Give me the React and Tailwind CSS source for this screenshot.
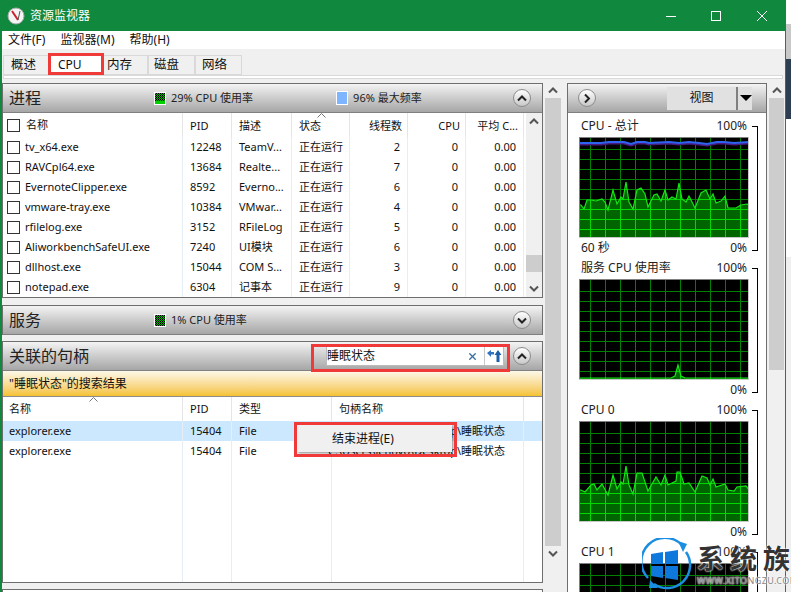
import { useId } from "react"
import { X } from "lucide-react"

const processes = [
    { name: "tv_x64.exe", pid: 12248, desc: "TeamV...", threads: 2 },
    { name: "RAVCpl64.exe", pid: 13684, desc: "Realte...", threads: 7 },
    { name: "EvernoteClipper.exe", pid: 8592, desc: "Everno...", threads: 6 },
    { name: "vmware-tray.exe", pid: 10384, desc: "VMwar...", threads: 4 },
    { name: "rfilelog.exe", pid: 3152, desc: "RFileLog", threads: 5 },
    { name: "AliworkbenchSafeUI.exe", pid: 7240, desc: "UI模块", threads: 6 },
    { name: "dllhost.exe", pid: 15044, desc: "COM S...", threads: 3 },
    { name: "notepad.exe", pid: 6304, desc: "记事本", threads: 9 },
]

const totalLine = [[0,68],[2,68],[5,72],[8,63],[12,63],[17,64],[23,62],[26,65],[29,73],[34,53],[38,67],[42,60],[44,62],[47,45],[50,65],[54,72],[58,53],[62,51],[66,57],[69,70],[75,58],[78,57],[82,64],[86,53],[89,63],[93,60],[97,62],[100,46],[103,62],[107,65],[110,59],[116,71],[122,56],[127,53],[131,62],[134,57],[137,66],[142,64],[146,59],[149,71],[157,71],[162,68],[168,67],[170,68]]
const cpu0Line = [[0,69],[2,69],[6,71],[12,64],[15,63],[18,69],[23,63],[29,74],[34,54],[38,68],[42,61],[44,63],[47,45],[50,64],[54,73],[58,52],[63,52],[69,70],[77,56],[82,64],[86,54],[89,64],[97,60],[98,51],[101,51],[105,63],[110,62],[116,71],[123,55],[128,57],[131,64],[134,58],[137,66],[146,63],[149,69],[155,70],[158,66],[167,65],[170,69]]
const serviceLine = [[0,99],[92,99],[96,97],[99,86],[102,97],[106,99],[170,99]]
const cpu1Line = [[0,70],[170,70]]
const freqLine = "0,6 22,6 30,5 45,5 52,7 58,5 66,5 70,6 90,5 100,6 110,5 120,6 128,7 138,5 145,5 155,6 170,5"

const Chevron = ({ dir = "up", className = "" }) => (
    <svg width="10" height="7" viewBox="0 0 10 7" className={`${dir === "down" ? "rotate-180" : dir === "right" ? "rotate-90" : ""} ${className}`}>
        <path d="M1 5.5 L5 1.5 L9 5.5" fill="none" stroke="currentColor" strokeWidth="2" />
    </svg>
)

const RoundButton = ({ dir }) => (
    <div className="flex h-[18px] w-[18px] shrink-0 items-center justify-center rounded-full border border-[#8c8c8c] bg-gradient-to-b from-white to-[#c8c8c8] text-[#222]">
        <Chevron dir={dir} />
    </div>
)

const Meter = ({ full }) => (
    <div className="flex h-[13px] w-[12px] flex-col border border-white bg-[#00d000]">
        <div className={`${full ? "h-full" : "h-[8px]"} bg-[repeating-conic-gradient(#000_0_25%,#00b000_0_50%)] bg-[length:2px_2px]`} />
    </div>
)

const PanelHeader = ({ title, children }) => (
    <div className="flex h-[29px] shrink-0 items-center border-b border-[#808080] bg-gradient-to-b from-[#f4f4f4] to-[#a6a6a6]">
        <span className="ml-[6px] text-[16px] leading-none text-[#222]">{title}</span>
        {children}
    </div>
)

const MeterText = ({ className, children }) => <span className={`text-[11px] text-[#222] ${className}`}>{children}</span>

const Scrollbar = () => (
    <div className="flex w-[16px] shrink-0 flex-col bg-[#f0f0f0]">
        <div className="flex h-[15px] items-center justify-center text-[#555]"><Chevron /></div>
        <div className="h-[448px] bg-[#cdcdcd]" />
        <div className="flex-1" />
        <div className="mb-[1px] flex h-[15px] items-center justify-center text-[#555]"><Chevron dir="down" /></div>
    </div>
)

const Graph = ({ line, freq }) => {
    const id = useId()
    const verticals = Array.from({ length: 11 }, (_, i) => 11 + i * 15)
    const horizontals = Array.from({ length: 9 }, (_, i) => 12 + i * 10)
    const area = `0,101 ${line.map((p) => p.join(",")).join(" ")} 170,101`
    const grid = (color) => (
        <g stroke={color} strokeWidth="1">
            {verticals.map((x) => <line key={x} x1={x + 0.5} y1="0" x2={x + 0.5} y2="101" />)}
            {horizontals.map((y) => <line key={y} x1="0" y1={y + 0.5} x2="170" y2={y + 0.5} />)}
        </g>
    )
    return (
        <svg width="170" height="101" viewBox="0 0 170 101" className="block">
            <defs>
                <clipPath id={id}><polygon points={area} /></clipPath>
            </defs>
            <rect width="170" height="101" fill="#000" />
            {grid("#008000")}
            <polygon points={area} fill="#006400" />
            <g clipPath={`url(#${id})`}>{grid("#00d800")}</g>
            <polyline points={line.map((p) => p.join(",")).join(" ")} fill="none" stroke="#14e614" strokeWidth="1.2" />
            {freq && (
                <g fill="none">
                    <polyline points={freq} stroke="#4b1a80" strokeWidth="2" transform="translate(0,1.5)" />
                    <polyline points={freq} stroke="#2e62f0" strokeWidth="2" />
                </g>
            )}
            <path d="M0 .5 H170 M.5 0 V101" stroke="#808080" strokeWidth="1" />
            <path d="M0 100.5 H170 M169.5 0 V101" stroke="#c8c8c8" strokeWidth="1" />
        </svg>
    )
}

const GraphBlock = ({ label, foot, line, freq }) => (
    <div className="flex pl-[11px] shrink-0">
        <div className="w-[170px] text-[12px] text-[#222]">
            <div className="flex h-[19px] items-center justify-between px-[2px]">
                <span>{label}</span>
                <span>100%</span>
            </div>
            <div className="mt-[2px]"><Graph line={line} freq={freq} /></div>
            <div className="flex h-[20px] items-center justify-between px-[2px]">
                <span>{foot}</span>
                <span>0%</span>
            </div>
        </div>
        <div className="ml-[3px] mb-[7px] mt-[10px] w-[6px] border-y border-r border-black" />
    </div>
)

const Watermark = () => (
    <div className="absolute left-[642px] top-[538px] flex w-[149px] overflow-hidden">
        <svg width="50" height="54" viewBox="0 0 50 54" className="shrink-0">
            <path d="M6 40 A23 23 0 0 1 40 7" fill="none" stroke="#1a8ee0" strokeWidth="2.5" />
            <path d="M44 14 A23 23 0 0 1 12 46" fill="none" stroke="#1a8ee0" strokeWidth="2.5" />
            <path d="M36 3 L45 6 L41 14 Z M8 42 L16 50 L7 50 Z" fill="#1a8ee0" />
            <path d="M9 16 L21 14 V26 H9 Z M23 14 L36 12 V26 H23 Z M9 28 H21 V40 L9 38 Z M23 28 H36 V42 L23 40 Z" fill="#0f78dc" />
        </svg>
        <div className="ml-[5px] flex flex-col leading-none text-[#333] [text-shadow:0_0_2px_white,0_0_2px_white]">
            <span className="mt-[7px] whitespace-nowrap text-[27px] font-bold leading-[27px] tracking-[6px]">系统族</span>
            <span className="mt-[4px] whitespace-nowrap text-[9px] tracking-[.4px] text-[#888]">WWW.XITONGZU.COM</span>
        </div>
    </div>
)

const App = () => {
    return (
        <div className="relative flex h-[592px] w-[791px] overflow-hidden bg-white text-[12px] text-[#111] [font-family:'Noto_Sans','Noto_Sans_CJK_SC',sans-serif]">
            <div className="flex h-full w-[786px] shrink-0 flex-col border-l-2 border-r border-[#10893e] bg-[#f0f0f0]">
                {/* title bar */}
                <div className="flex h-[31px] shrink-0 items-center bg-[#10893e] text-white">
                    <svg width="18" height="18" viewBox="0 0 18 18" className="ml-[5px]">
                        <circle cx="9" cy="9" r="8" fill="#f4f4f4" stroke="#a9a9a9" />
                        <path d="M5 4 L11 13" stroke="#c8202c" strokeWidth="2" />
                        <path d="M13 4 L11 13" stroke="#555" strokeWidth="1" />
                    </svg>
                    <span className="ml-[5px] text-[12px]">资源监视器</span>
                    <svg width="10" height="10" viewBox="0 0 10 10" className="ml-auto"><path d="M0 5.5 H10" stroke="currentColor" /></svg>
                    <svg width="10" height="10" viewBox="0 0 10 10" className="ml-[35px]"><rect x=".5" y=".5" width="9" height="9" fill="none" stroke="currentColor" /></svg>
                    <svg width="10" height="10" viewBox="0 0 10 10" className="ml-[36px] mr-[18px]"><path d="M0 0 L10 10 M10 0 L0 10" stroke="currentColor" /></svg>
                </div>

                {/* menu */}
                <div className="flex h-[18px] shrink-0 items-center gap-[15px] bg-white pl-[6px] text-[12px]">
                    <span>文件(F)</span>
                    <span>监视器(M)</span>
                    <span>帮助(H)</span>
                </div>

                {/* tabs */}
                <div className="flex h-[26px] shrink-0 items-end pl-[1px] text-[12.5px]">
                    <div className="flex h-[20px] w-[46px] items-center border border-[#d9d9d9] pl-[7px]">概述</div>
                    <div className="flex h-[20px] w-[54px] items-center bg-white pl-[9px] text-[12px]">CPU</div>
                    <div className="flex h-[20px] w-[45px] items-center border border-[#d9d9d9] pl-[3px]">内存</div>
                    <div className="flex h-[20px] w-[47px] items-center border border-[#d9d9d9] pl-[5px]">磁盘</div>
                    <div className="flex h-[20px] w-[47px] items-center border border-[#d9d9d9] pl-[6px]">网络</div>
                </div>
                <div className="ml-[1px] h-[4px] w-[780px] shrink-0 border border-[#d9d9d9] bg-white" />

                {/* content */}
                <div className="mt-[4px] flex min-h-0 flex-1">
                    {/* left column */}
                    <div className="flex w-[541px] shrink-0 flex-col">
                        <div className="flex h-[215px] shrink-0 flex-col border border-[#6e6e6e] bg-white">
                            <PanelHeader title="进程">
                                <div className="ml-[113px]"><Meter /></div>
                                <MeterText className="ml-[5px]">29% CPU 使用率</MeterText>
                                <div className="ml-[83px] h-[14px] w-[12px] border border-white bg-[#7db5ff]" />
                                <MeterText className="ml-[5px]">96% 最大频率</MeterText>
                                <div className="ml-auto mr-[11px]"><RoundButton dir="up" /></div>
                            </PanelHeader>
                            <div className="flex min-h-0 flex-1">
                                <div className="w-[521px] shrink-0 text-[11px]">
                                    <div className="grid h-[24px] grid-cols-[180px_49px_60px_58px_58px_58px_58px] items-stretch">
                                        <div className="flex items-center border-r border-[#e5e5e5] pl-[4px] pt-[1px]">
                                            <span className="h-[13px] w-[13px] border border-[#333]" />
                                            <span className="ml-[6px]">名称</span>
                                        </div>
                                        <div className="flex items-center border-r border-[#e5e5e5] pl-[7px] pt-[2px]">PID</div>
                                        <div className="flex items-center border-r border-[#e5e5e5] pl-[7px] pt-[2px]">描述</div>
                                        <div className="relative flex items-center border-r border-[#e5e5e5] pl-[7px] pt-[2px]">
                                            状态
                                            <svg width="9" height="5" viewBox="0 0 9 5" className="absolute left-[25px] top-0 text-[#777]"><path d="M.5 4.5 L4.5 .5 L8.5 4.5" fill="none" stroke="currentColor" /></svg>
                                        </div>
                                        <div className="flex items-center justify-end border-r border-[#e5e5e5] pr-[5px] pt-[2px]">线程数</div>
                                        <div className="flex items-center justify-end border-r border-[#e5e5e5] pr-[5px] pt-[2px]">CPU</div>
                                        <div className="flex items-center justify-end border-r border-[#e5e5e5] pr-[5px] pt-[2px]">平均 C...</div>
                                    </div>
                                    {processes.map((p) => (
                                        <div key={p.pid} className="grid h-[20px] grid-cols-[180px_49px_60px_58px_58px_58px_58px] items-stretch">
                                            <div className="flex items-center border-r border-[#e5eef7] pl-[4px]">
                                                <span className="h-[13px] w-[13px] border border-[#333]" />
                                                <span className="ml-[5px] pt-[1px]">{p.name}</span>
                                            </div>
                                            <div className="flex items-center border-r border-[#e5eef7] pl-[7px] pt-[1px]">{p.pid}</div>
                                            <div className="flex items-center overflow-hidden whitespace-nowrap border-r border-[#e5eef7] pl-[7px] pt-[1px]">{p.desc}</div>
                                            <div className="flex items-center border-r border-[#e5eef7] pl-[7px] pt-[1px]">正在运行</div>
                                            <div className="flex items-center justify-end border-r border-[#e5eef7] pr-[7px] pt-[1px]">{p.threads}</div>
                                            <div className="flex items-center justify-end border-r border-[#e5eef7] pr-[7px] pt-[1px]">0</div>
                                            <div className="flex items-center justify-end border-r border-[#e5eef7] pr-[7px] pt-[1px]">0.00</div>
                                        </div>
                                    ))}
                                </div>
                                <div className="ml-[2px] flex w-[16px] flex-col bg-[#f0f0f0] text-[#555]">
                                    <div className="flex h-[17px] items-center justify-center"><Chevron /></div>
                                    <div className="flex-1" />
                                    <div className="h-[17px] bg-[#cdcdcd]" />
                                    <div className="flex h-[25px] items-center justify-center pt-[8px]"><Chevron dir="down" /></div>
                                </div>
                            </div>
                        </div>

                        <div className="mt-[7px] h-[30px] shrink-0 border border-[#6e6e6e] bg-white">
                            <PanelHeader title="服务">
                                <div className="ml-[113px]"><Meter full /></div>
                                <MeterText className="ml-[5px]">1% CPU 使用率</MeterText>
                                <div className="ml-auto mr-[11px]"><RoundButton dir="down" /></div>
                            </PanelHeader>
                        </div>

                        <div className="mt-[6px] flex h-[242px] shrink-0 flex-col border border-[#6e6e6e] bg-white">
                            <PanelHeader title="关联的句柄">
                                <div className="ml-auto flex h-[20px] w-[178px] items-center border border-[#bbb] bg-white text-[12px]">
                                    <span>睡眠状态</span>
                                    <X size={11} strokeWidth={3} className="ml-auto text-[#3a6ea5]" />
                                    <span className="ml-[6px] h-[18px] w-px bg-[#c8c8c8]" />
                                    <svg width="16" height="14" viewBox="0 0 16 14" className="mx-[1px]">
                                        <path d="M1 4 L5 1 V3 H8 V5.5 H5 V8 Z" fill="#2f74c0" />
                                        <path d="M12 1 L15.5 6 H13.5 V13 H10.5 V6 H8.5 Z" fill="#1c5fa8" />
                                    </svg>
                                </div>
                                <div className="ml-[9px] mr-[11px]"><RoundButton dir="up" /></div>
                            </PanelHeader>
                            <div className="flex h-[26px] shrink-0 items-center border-b border-[#8c8c8c] bg-gradient-to-b from-[#fdf8e8] to-[#f5c22b] pl-[6px] text-[12px]">
                                "睡眠状态"的搜索结果
                            </div>
                            <div className="relative flex min-h-0 flex-1 flex-col text-[11px]">
                                <div className="grid h-[24px] shrink-0 grid-cols-[180px_49px_100px_192px] items-stretch">
                                    <div className="relative flex items-center border-r border-[#e5e5e5] pl-[6px]">
                                        名称
                                        <svg width="9" height="5" viewBox="0 0 9 5" className="absolute left-[86px] top-0 text-[#777]"><path d="M.5 4.5 L4.5 .5 L8.5 4.5" fill="none" stroke="currentColor" /></svg>
                                    </div>
                                    <div className="flex items-center border-r border-[#e5e5e5] pl-[7px]">PID</div>
                                    <div className="flex items-center border-r border-[#e5e5e5] pl-[7px]">类型</div>
                                    <div className="flex items-center border-r border-[#e5e5e5] pl-[7px]">句柄名称</div>
                                </div>
                                {[0, 1].map((i) => (
                                    <div key={i} className={`grid h-[20px] shrink-0 grid-cols-[180px_49px_100px_192px] items-stretch ${i === 0 ? "bg-[#cce8ff]" : ""}`}>
                                        <div className="flex items-center border-r border-[#e5eef7] pl-[6px]">explorer.exe</div>
                                        <div className="flex items-center border-r border-[#e5eef7] pl-[7px]">15404</div>
                                        <div className="flex items-center border-r border-[#e5eef7] pl-[7px]">File</div>
                                        <div className="flex items-center justify-end whitespace-nowrap border-r border-[#e5eef7] pr-[18px]">C:\Users\lenovo\Desktop\睡眠状态</div>
                                    </div>
                                ))}
                                <div className="grid flex-1 grid-cols-[180px_49px_100px_192px]">
                                    <div className="border-r border-[#e5eef7]" />
                                    <div className="border-r border-[#e5eef7]" />
                                    <div className="border-r border-[#e5eef7]" />
                                    <div className="border-r border-[#e5eef7]" />
                                </div>
                            </div>
                        </div>

                        <div className="mt-[6px] h-[30px] shrink-0 border border-[#6e6e6e] bg-white" />
                    </div>

                    <div className="ml-[2px]"><Scrollbar /></div>

                    {/* right column */}
                    <div className="ml-[6px] flex w-[200px] shrink-0 flex-col overflow-hidden border border-b-0 border-[#6e6e6e] bg-white">
                        <div className="flex h-[29px] shrink-0 items-center border-b border-[#808080] bg-gradient-to-b from-[#f4f4f4] to-[#a6a6a6]">
                            <div className="ml-[10px]"><RoundButton dir="right" /></div>
                            <div className="ml-[71px] flex h-[23px] w-[85px] items-center bg-[#e1e1e1] text-[12px]">
                                <span className="w-[69px] text-center">视图</span>
                                <span className="h-[23px] w-[2px] bg-[#808080]" />
                                <span className="ml-[2px] h-0 w-0 border-x-[6px] border-t-[6px] border-x-transparent border-t-black" />
                            </div>
                        </div>
                        <div className="mt-[3px] flex flex-col">
                            <GraphBlock label="CPU - 总计" foot="60 秒" line={totalLine} freq={freqLine} />
                            <GraphBlock label="服务 CPU 使用率" foot="" line={serviceLine} />
                            <GraphBlock label="CPU 0" foot="" line={cpu0Line} />
                            <GraphBlock label="CPU 1" foot="" line={cpu1Line} />
                        </div>
                    </div>

                    <div className="ml-[2px] flex w-[15px] shrink-0 flex-col bg-[#f0f0f0]">
                        <div className="flex h-[15px] items-center justify-center text-[#555]"><Chevron /></div>
                        <div className="h-[272px] bg-[#cdcdcd]" />
                    </div>
                </div>
            </div>

            {/* what is left of the window behind */}
            <div className="flex flex-1 flex-col">
                <div className="h-[24px] bg-white" />
                <div className="h-[35px] bg-[#c8c8c8]" />
                <div className="h-[60px] bg-[#2d3e50]" />
                <div className="h-[138px] bg-white" />
                <div className="flex-1 bg-[#efefef]" />
            </div>

            {/* context menu */}
            <div className="absolute left-[297px] top-[425px] flex h-[27px] w-[155px] items-center bg-[#f0f0f0] pl-[35px] text-[12px] shadow-[1px_1px_3px_rgba(0,0,0,.5)]">
                结束进程(E)
            </div>

            {/* red annotation boxes */}
            <div className="absolute left-[48px] top-[53px] h-[22px] w-[56px] border-[3px] border-[#f03a3a]" />
            <div className="absolute left-[311px] top-[344px] h-[28px] w-[199px] border-[3px] border-[#f03a3a]" />
            <div className="absolute left-[294px] top-[422px] h-[35px] w-[163px] border-[3px] border-[#f03a3a]" />

            <Watermark />
        </div>
    )
}

export default App
